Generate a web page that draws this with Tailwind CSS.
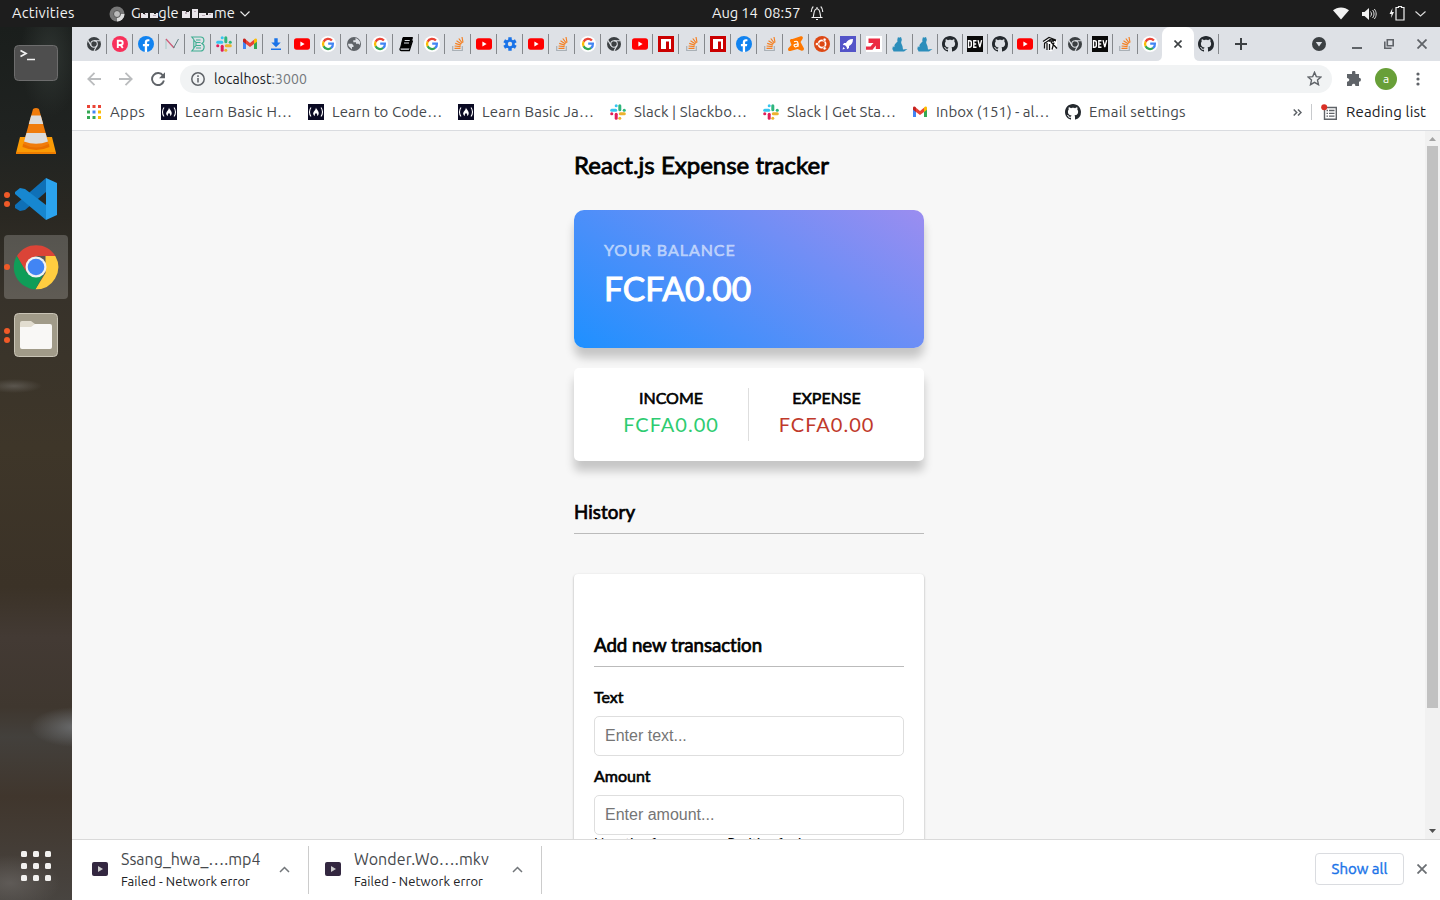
<!DOCTYPE html>
<html lang="en">
<head>
<meta charset="utf-8">
<title>Expense tracker</title>
<script src="https://cdn.jsdelivr.net/npm/@tailwindcss/browser@4"></script>
</head>
<body class="h-[900px] w-[1440px] overflow-hidden flex flex-col font-['Ubuntu','Noto_Sans',sans-serif] text-[15px] leading-none bg-white">

<svg class="hidden">
  <symbol id="chrome-dark" viewBox="0 0 16 16"><circle cx="8" cy="8" r="7" fill="#3c4043"/><circle cx="8" cy="8" r="3.300" fill="none" stroke="#dee1e6" stroke-width="1.100"/><path d="M8 4.700h6.200M5.100 9.600 2 4.400M10.900 9.600 8 15" stroke="#dee1e6" stroke-width="1.100" fill="none"/></symbol>
  <symbol id="r" viewBox="0 0 16 16"><circle cx="8" cy="8" r="8" fill="#f8305a"/><path d="M5.800 12V4.800h2.800a2.100 2.100 0 0 1 0 4.200H6M8.600 9l2.200 3" stroke="#fff" stroke-width="1.900" fill="none"/></symbol>
  <symbol id="fb" viewBox="0 0 16 16"><circle cx="8" cy="8" r="8" fill="#1183f0"/><path d="M6.800 16v-5.700H4.900V8h1.900V6.300c0-2 1.200-3.100 3-3.100l1.600.1v2h-1c-1 0-1.300.6-1.300 1.200V8h2.200l-.4 2.300H9.100V16z" fill="#fff"/></symbol>
  <symbol id="n" viewBox="0 0 16 16"><path d="M2 13V3l9 9" stroke="#a7c9c6" stroke-width="1" fill="none"/><path d="m2 3 8 9" stroke="#d25a78" stroke-width="1.200"/><path d="m9.500 12 5-9" stroke="#5f7d80" stroke-width="1"/></symbol>
  <symbol id="b" viewBox="0 0 16 16"><path d="M1.800 1h9c3.500 0 4.200 5 1.200 6.500 3.500 1.500 2.500 7.500-1.500 7.500H1.800l2-2.500V3.500zM6 4h4.500M6 12h5M6 6.500h4.500M6 9.500h5M3.800 4 6 6.500v3L3.800 12" fill="none" stroke="#3fae92" stroke-width="1.100"/></symbol>
  <symbol id="slack" viewBox="0 0 16 16"><g stroke-width="3" stroke-linecap="round" fill="none"><path d="M1.700 6.200h4" stroke="#36c5f0"/><path d="M6.200 1.700v.1" stroke="#36c5f0"/><path d="M9.800 1.700v4" stroke="#2eb67d"/><path d="M14.300 6.200h-.1" stroke="#2eb67d"/><path d="M14.300 9.800h-4" stroke="#ecb22e"/><path d="M9.800 14.300v-.1" stroke="#ecb22e"/><path d="M6.200 14.300v-4" stroke="#e01e5a"/><path d="M1.700 9.800h.1" stroke="#e01e5a"/></g></symbol>
  <symbol id="gmail" viewBox="0 0 16 16"><path d="M1 4v9h3V7z" fill="#4285f4"/><path d="M12 7v6h3V4z" fill="#34a853"/><path d="M12 3.500V8l3-2.200V4c0-1.500-1.700-2-3-.5" fill="#fbbc04"/><path d="M4 3.500V8L1 5.800V4c0-1.500 1.700-2 3-.5" fill="#c5221f"/><path d="M4 3.800 8 7l4-3.200V8l-4 3-4-3z" fill="#ea4335"/></symbol>
  <symbol id="down" viewBox="0 0 16 16"><path d="M6.300 2.200h3.400v4.300h3L8 11.300 3.300 6.500h3zM3 12.500h10V14H3z" fill="#1a73e8"/></symbol>
  <symbol id="yt" viewBox="0 0 16 16"><rect y="2.300" width="16" height="11.400" rx="2.600" fill="#f00"/><path d="M6.400 5.600v4.800L10.600 8z" fill="#fff"/></symbol>
  <symbol id="g" viewBox="0 0 16 16"><circle cx="8" cy="8" r="8" fill="#fff"/><g fill="none" stroke-width="2.300"><path d="M11.900 4.600A5 5 0 0 0 3.600 5.700" stroke="#ea4335"/><path d="M3.700 5.500a5 5 0 0 0 0 5" stroke="#fbbc05"/><path d="M3.600 10.300a5 5 0 0 0 7.600 1.600" stroke="#34a853"/><path d="M11 12a5 5 0 0 0 1.900-4.400H8.200" stroke="#4285f4"/></g></symbol>
  <symbol id="globe" viewBox="0 0 16 16"><circle cx="8" cy="8" r="7" fill="#5f6368"/><path d="M2 7.800h4l1.500 1.700V11H6v2.500L2.500 10zM9.500 2v2.200H7.300v2H10v1.600h2.500l1.300 1.200.3-3C13 3.500 11 2.500 9.500 2" fill="#dee1e6"/></symbol>
  <symbol id="book" viewBox="0 0 16 16"><path d="M5 1.500h9.500L11.500 12H2.500z" stroke="#000" stroke-linejoin="round"/><path d="M2.300 12c-1 2 .5 2.500 1 2.500h8l3.200-10" fill="none" stroke="#000" stroke-width="1.300"/><path d="M6.700 4.500h5M6 7h5" stroke="#dee1e6"/></symbol>
  <symbol id="so" viewBox="0 0 16 16"><path d="M2.700 10v4.500h9.600V10" fill="none" stroke="#a9b0b6" stroke-width="1.200"/><path d="M4.500 12.300h6M4.600 10l6 .7M5.200 7.400l5.700 1.700M6.500 4.700l5 3.200M8.800 2.500l3.500 4.700M12 1l1 5.500" stroke="#f48024" stroke-width="1.200"/></symbol>
  <symbol id="gear" viewBox="0 0 16 16"><g stroke="#1a73e8" stroke-width="3.400"><path d="M8 1.300v13.400M2.200 4.700l11.600 6.600M2.200 11.300l11.600-6.600"/></g><circle cx="8" cy="8" r="4.700" fill="#1a73e8"/><circle cx="8" cy="8" r="2.200" fill="#dee1e6"/></symbol>
  <symbol id="npm" viewBox="0 0 16 16"><path d="M0 0h16v16H0z" fill="#cb0000"/><path d="M3 3h10v10h-2V5.500H8V13H3z" fill="#fff"/></symbol>
  <symbol id="avast" viewBox="0 0 16 16"><path d="M4.500 3 12 .5c2.500-.8 3.500 1 2.500 2.500L12.500 6l3.500 6.500c0 2-1.500 2.500-3 2L9.500 13l-7 2C0 15-.5 13.500.5 12L3.500 9 2 5C1.800 3.500 2.500 2.800 4.500 3" fill="#ff7800"/><path d="M6 5.800c3.500-1.500 4.500 0 4 5M10 7.800c-4 .3-4.500 1.500-3.500 2.500s2.500.5 3.500-1" fill="none" stroke="#fff" stroke-width="1.200"/></symbol>
  <symbol id="ubuntu" viewBox="0 0 16 16"><circle cx="8" cy="8" r="8" fill="#dd4814"/><circle cx="8" cy="8" r="3.600" fill="none" stroke="#fff" stroke-width="1.700"/><g fill="#fff" stroke="#dd4814" stroke-width=".6"><circle cx="3" cy="8" r="1.600"/><circle cx="10.600" cy="3.700" r="1.600"/><circle cx="10.600" cy="12.300" r="1.600"/></g></symbol>
  <symbol id="rocket" viewBox="0 0 16 16"><path d="M0 0h16v16H0z" fill="#5354c8"/><path d="M13 3C9 3 7 5 6 7H4L2.800 9l2.200.3L6.700 11l.3 2.200L9 12v-2c2-1 4-3 4-7M3.300 11l-.8 2.500L5 12.700z" fill="#fff"/></symbol>
  <symbol id="redarrow" viewBox="0 0 16 16"><path d="M0 0h16v16H0z" fill="#fff"/><path d="M2.500 2.500H14V13h-4.200V9.500L6.500 13.800H0v-3.300h4.500L7.500 7h-5z" fill="#ec2b43"/></symbol>
  <symbol id="cat" viewBox="0 0 16 16"><path d="m6 1 1 .8L9 1l.8 2.500c0 1.500-.8 2-.6 3.500l1.300 3.200.5 3.300 4.500-.5-3.500 2.500H2.300C1 13 2 11.500 2.500 10.500 2 8 4.500 7 5.500 5.500 5 4 5.500 2.500 6 1" fill="#2c8ebb"/><path d="m1 10 2 3-1 3L.3 13z" fill="#2c8ebb"/></symbol>
  <symbol id="gh" viewBox="0 0 16 16"><path fill="#24292e" d="M8 0C3.580 0 0 3.580 0 8c0 3.540 2.290 6.530 5.470 7.590.4.070.55-.17.55-.38 0-.19-.01-.82-.01-1.490-2.010.37-2.530-.49-2.690-.94-.09-.23-.48-.94-.82-1.130-.28-.15-.68-.52-.01-.53.63-.01 1.080.58 1.230.82.72 1.210 1.870.87 2.330.66.070-.52.28-.87.51-1.070-1.780-.2-3.640-.89-3.640-3.950 0-.87.31-1.590.82-2.150-.08-.2-.36-1.020.08-2.120 0 0 .67-.21 2.200.82.64-.18 1.320-.27 2-.27s1.360.09 2 .27c1.530-1.040 2.200-.82 2.200-.82.44 1.100.16 1.920.08 2.120.51.56.82 1.270.82 2.150 0 3.070-1.870 3.750-3.650 3.950.29.25.54.73.54 1.480 0 1.070-.01 1.930-.01 2.200 0 .21.15.46.55.38A8.010 8.010 0 0 0 16 8c0-4.420-3.580-8-8-8"/></symbol>
  <symbol id="dev" viewBox="0 0 16 16"><path d="M0 0h16v16H0z" fill="#0a0a0a"/><path d="M1.500 4.700v6.600h.9c1.400 0 1.900-.6 1.900-1.700V6.400c0-1.100-.5-1.700-1.900-1.700zM9.500 4.700H6.800v6.600h2.700M6.800 8h2.400M11 4.200l1.800 7 1.800-7" fill="none" stroke="#fff" stroke-width="1.400"/></symbol>
  <symbol id="box" viewBox="0 0 16 16"><path d="M1 6 7 1l8 3v7l-6 4.500L2 12z" fill="#fff"/><path d="M1 5.500 7 1.500 14 4M3 7l6-4 5 2M2.500 6.500v6M5 7v7M7.500 8v6M9 6l6 6.500M12 6.500l-2 7M7 5h5" stroke="#111" stroke-width="1.300" fill="none"/></symbol>
  <symbol id="fcc" viewBox="0 0 16 16"><path d="M0 0h16v16H0z" fill="#0a0a23"/><path d="M3 3.500c-2 2.500-2 6.500 0 9M13 3.500c2 2.500 2 6.500 0 9" fill="none" stroke="#fff" stroke-width="1.100"/><path d="M8 3.500c.3 2 3 3.500 2.700 6C10.600 11 9.700 12 9 12c.5-1 .3-2-1-3-1.200 1-1.500 2-1 3-1.500-.7-2.200-2-1.700-3.300C5.900 7 7.700 6 8 3.500" fill="#fff"/></symbol>
</svg>

<!-- desktop top bar -->
<header class="h-[27px] shrink-0 bg-[#1d1d1d] text-[#f2f2f2] text-[14.67px] flex items-center relative">
  <span class="ml-3 w-[63px] tracking-[0.25px] whitespace-nowrap">Activities</span>
  <svg class="ml-[34px] size-4" viewBox="0 0 16 16"><circle cx="8" cy="8" r="7.500" fill="#777"/><path d="M8 8h7.500A7.500 7.500 0 0 1 8 15.500z" fill="#ddd"/><circle cx="8" cy="8" r="3.500" fill="#bbb" stroke="#555"/></svg>
  <span class="ml-[6px] w-[104px] relative tracking-[0.09px] whitespace-nowrap">Google Chrome
    <svg class="absolute left-[10px] top-[-2px]" width="75" height="17" viewBox="0 0 75 17" shape-rendering="crispEdges"><path fill="#1d1d1d" d="M0 0h17v17H0zM41 0h32v17H41z"/><path fill="#e9e6ea" d="M0 9h7v5H0zM9 9h8v5H9zM41 7h8v7h-8zM51 5h6v9h-6zM58 9h14v5H58z"/><path fill="#b8a8b4" d="M3 10h2v1H3zM12 11h3v1h-3zM44 8h2v2h-2zM53 7h2v1h-2zM61 11h3v1h-3zM68 10h2v1h-2z"/><path fill="#1d1d1d" d="M2 9h2v1H2zM13 9h2v1h-2zM45 7h3v1h-3zM65 9h2v2h-2z"/></svg>
  </span>
  <svg class="ml-[5px]" width="10" height="6" viewBox="0 0 10 6"><path d="m.5.5 4.500 4.500L9.500.5" fill="none" stroke="#e8e8e8" stroke-width="1.200"/></svg>
  <div class="absolute left-[712px] top-0 h-full flex items-center">
    <span class="w-[98px] tracking-[-0.1px] whitespace-pre">Aug 14  08:57</span>
    <svg class="mb-[2px]" width="14" height="16" viewBox="0 0 14 16" fill="none" stroke="#f2f2f2" stroke-width="1.100"><path d="M1.500 12.500h11M3.200 12c1-3 .3-8 3.800-8.300 3.500.3 2.800 5.300 3.800 8.300M6 14.500h2M7 2v1.500M3.300 1.500C1.500 3 1.300 5 1.200 7M10.700 1.500C12.500 3 12.700 5 12.800 7"/></svg>
  </div>
  <div class="ml-auto mr-[14px] flex items-center">
    <svg width="16" height="13" viewBox="0 0 16 13"><path d="M0 3.300C4-.6 12-.6 16 3.300L8 12.500z" fill="#f2f2f2"/></svg>
    <svg class="ml-3" width="16" height="14" viewBox="0 0 16 14"><path d="M1 5h2.500L8 1v12L3.500 9H1z" fill="#f2f2f2"/><path d="M9.500 4.500c1.300 1.500 1.300 3.500 0 5M11.500 3c2 2.300 2 5.700 0 8M13.300 2c2.500 3 2.500 7 0 10" fill="none" stroke="#ddd"/></svg>
    <svg class="ml-3 mb-[2px]" width="16" height="16" viewBox="0 0 16 16"><path d="M3.500 3 .5 9h2L2 13l3-6H3z" fill="#f2f2f2"/><path d="M7 2.500h2.500v-1h3v1H15v12.500H7z" fill="none" stroke="#f2f2f2" stroke-width="1.200"/></svg>
    <svg class="ml-[10px]" width="11" height="6" viewBox="0 0 11 6"><path d="m.5.5 5 4.500 5-4.500" fill="none" stroke="#ddd" stroke-width="1.100"/></svg>
  </div>
</header>

<div class="flex-1 flex min-h-0">
  <!-- dock -->
  <nav class="w-[72px] shrink-0 pt-1 flex flex-col items-center gap-1 bg-[radial-gradient(ellipse_28px_7px_at_14px_359px,#6a6660aa,transparent),radial-gradient(ellipse_46px_20px_at_76px_700px,#74777acc,transparent),radial-gradient(ellipse_50px_28px_at_10px_856px,#6b6764aa,transparent),radial-gradient(ellipse_30px_60px_at_50px_30px,#2e3431,transparent),linear-gradient(180deg,#1a1e1c_0px,#202321_110px,#2a2822_190px,#37322a_270px,#3a342a_330px,#3e3629_420px,#3b3227_560px,#433a34_610px,#3f372f_680px,#43403c_710px,#40362d_770px,#484440_873px)]">
    <div class="size-16 grid place-items-center"><svg width="44" height="36" viewBox="0 0 44 36"><rect x=".5" y=".5" width="43" height="35" rx="4" fill="#4e4e4e" stroke="#6d6d6d"/><path d="m6.500 5.500 5.500 3-5.500 3M13 14.500h8" fill="none" stroke="#f2f2f2" stroke-width="1.700"/></svg></div>
    <div class="size-16 grid place-items-center"><svg width="42" height="46" viewBox="0 0 42 46"><path d="M5 29h32l4 16H1z" fill="#fb9b05"/><path d="M1 44h40v2H1z" fill="#ef7e00"/><path d="M18 1q3-2 6 0l10 36q-13 7-26 0z" fill="#f07c0c"/><path d="M16.200 7.500h9.600l2.400 8.500H13.800zM11.500 25h19l2.500 8.500q-12 4.500-24 0z" fill="#dcdcdc"/><path d="M8 36q13 7 26 0l.5 3q-13 6-27 0z" fill="#e86f00"/></svg></div>
    <div class="size-16 grid place-items-center relative">
      <svg width="42" height="42" viewBox="0 0 42 42"><path d="M31 0 0 27v3l5 3 5-1L31 14z" fill="#0f70b7"/><path d="m0 14 5-4 5 1 21 16v15L0 16z" fill="#1787d0"/><path d="m31 0 11 5v32l-11 5z" fill="#2ba3ee"/></svg>
      <span class="absolute left-0 top-[25px] size-[6px] rounded-full bg-[#f05a28]"></span><span class="absolute left-0 top-[34px] size-[6px] rounded-full bg-[#f05a28]"></span>
    </div>
    <div class="size-16 grid place-items-center relative rounded bg-white/20">
      <svg width="46" height="46" viewBox="0 0 46 46"><path d="M4 12a22.300 22.300 0 0 1 38.300 0H23L13 28z" fill="#db4437"/><path d="M42.300 12A22.300 22.300 0 0 1 22.500 45.300L32.500 29V12z" fill="#ffcd40"/><path d="M3.700 12A22.300 22.300 0 0 0 22.500 45.300L31 29l-17 0z" fill="#0f9d58"/><circle cx="23" cy="23" r="10.500" fill="#f1f1f1"/><circle cx="23" cy="23" r="8.300" fill="#4285f4"/></svg>
      <span class="absolute left-0 top-[29px] size-[6px] rounded-full bg-[#f05a28]"></span>
    </div>
    <div class="size-16 grid place-items-center relative">
      <svg width="44" height="44" viewBox="0 0 44 44"><rect x=".5" y=".5" width="43" height="43" rx="4" fill="#a19b89" stroke="#c9c4b6"/><path d="M6 12V10q0-2 2-2h9l4 3v5H6z" fill="#e2ddd0"/><path d="M6 14h11l4-3h15q2 0 2 2v21q0 2-2 2H8q-2 0-2-2z" fill="#f9f8f6"/></svg>
      <span class="absolute left-0 top-[25px] size-[6px] rounded-full bg-[#f05a28]"></span><span class="absolute left-0 top-[34px] size-[6px] rounded-full bg-[#f05a28]"></span>
    </div>
    <svg class="mt-auto mb-[19px]" width="30" height="30" viewBox="0 0 30 30" fill="#f2f1ef"><rect width="6" height="6" rx="1.500"/><rect x="12" width="6" height="6" rx="1.500"/><rect x="24" width="6" height="6" rx="1.500"/><rect y="12" width="6" height="6" rx="1.500"/><rect x="12" y="12" width="6" height="6" rx="1.500"/><rect x="24" y="12" width="6" height="6" rx="1.500"/><rect y="24" width="6" height="6" rx="1.500"/><rect x="12" y="24" width="6" height="6" rx="1.500"/><rect x="24" y="24" width="6" height="6" rx="1.500"/></svg>
  </nav>

  <!-- browser window -->
  <section class="flex-1 min-w-0 flex flex-col">
    <div class="h-[34px] shrink-0 bg-[#dee1e6] flex pl-[9px]">
      <div id="tabs" class="flex"></div>
      <div class="w-[24px] grid place-items-center"><svg class="size-4"><use href="#g"/></svg></div>
      <div class="relative w-8 bg-white rounded-t-lg grid place-items-center">
        <svg width="8" height="8" viewBox="0 0 8 8"><path d="m.5.5 7 7m0-7-7 7" stroke="#3c4043" stroke-width="1.600"/></svg>
        <svg class="absolute bottom-0 -left-[6px]" width="6" height="6"><path d="M6 0v6H0q6 0 6-6" fill="#fff"/></svg>
        <svg class="absolute bottom-0 -right-[6px]" width="6" height="6"><path d="M0 0v6h6Q0 6 0 0" fill="#fff"/></svg>
      </div>
      <div class="w-[25px] h-[34px] flex items-center justify-between"><svg class="size-4 ml-1"><use href="#gh"/></svg><span class="w-px h-5 bg-[#85888c]"></span></div>
      <svg class="ml-4 mt-[11px]" width="12" height="12" viewBox="0 0 12 12"><path d="M6 0v12M0 6h12" stroke="#3c4043" stroke-width="2"/></svg>
      <div class="ml-auto mr-[13px] flex items-center">
        <svg width="14" height="14" viewBox="0 0 14 14"><circle cx="7" cy="7" r="7" fill="#3c4043"/><path d="M3.800 5h6.400L7 9.500z" fill="#dee1e6"/></svg>
        <span class="ml-[26px] mt-2 w-[10px] h-[2px] bg-[#5f6368]"></span>
        <svg class="ml-[22px]" width="10" height="10" viewBox="0 0 10 10" fill="none" stroke="#5f6368" stroke-width="1.600"><path d="M3.300.8h5.900v5.900H3.300zM.8 2.500v6.700h6.700"/></svg>
        <svg class="ml-[23px]" width="10" height="10" viewBox="0 0 10 10"><path d="m.5.5 9 9m0-9-9 9" stroke="#5f6368" stroke-width="1.800"/></svg>
      </div>
    </div>

    <div class="h-9 shrink-0 flex items-center pl-[15px] pr-[20px]">
      <svg width="14" height="14" viewBox="0 0 14 14" fill="none" stroke="#babcbe" stroke-width="1.800"><path d="M14 7H1.500M7.500.8 1.300 7l6.200 6.200"/></svg>
      <svg class="ml-[18px]" width="14" height="14" viewBox="0 0 14 14" fill="none" stroke="#babcbe" stroke-width="1.800"><path d="M0 7h12.500M6.500.8 12.700 7l-6.200 6.200"/></svg>
      <svg class="ml-[18px]" width="14" height="14" viewBox="0 0 14 14"><path d="M12 3.600A6 6 0 1 0 12.900 8.500" fill="none" stroke="#5f6368" stroke-width="1.900"/><path d="M14 .3v6H8z" fill="#5f6368"/></svg>
      <div class="ml-[15px] w-[1152px] h-7 rounded-full bg-[#f1f3f4] flex items-center pl-[11px] pr-[10px] text-[14px]">
        <svg width="14" height="14" viewBox="0 0 14 14"><circle cx="7" cy="7" r="6.200" fill="none" stroke="#5f6368" stroke-width="1.500"/><path d="M7 6v4.500M7 3.300v1.600" stroke="#5f6368" stroke-width="1.500"/></svg>
        <span class="ml-[9px] tracking-[0.07px] text-[#202124] whitespace-nowrap">localhost<span class="text-[#73777b]">:3000</span></span>
        <svg class="ml-auto mb-px" width="15" height="15" viewBox="0 0 15 15"><path d="m7.500 1.300 1.800 4.300 4.700.4-3.500 3.100 1 4.600-4-2.400-4 2.400 1-4.600L1 6l4.700-.4z" fill="none" stroke="#5f6368" stroke-width="1.400"/></svg>
      </div>
      <svg class="ml-[14px]" width="16" height="16" viewBox="0 0 16 16"><path d="M6 1.500a1.700 1.700 0 0 1 3.400 0V3H13v3.700a2 2 0 0 1 0 4V15H9.300c.3-3-3.600-3-3.500 0H1v-4.300c3-.2 3-3.500 0-3.700V3h5z" fill="#5f6368"/></svg>
      <span class="ml-[13px] size-[22px] rounded-full bg-[#689f38] text-white grid place-items-center text-[12px]">a</span>
      <svg class="ml-auto" width="4" height="14" viewBox="0 0 4 14" fill="#5f6368"><circle cx="2" cy="2" r="1.600"/><circle cx="2" cy="7" r="1.600"/><circle cx="2" cy="12" r="1.600"/></svg>
    </div>

    <div class="h-[34px] shrink-0 border-b border-[#dadce0] flex items-center pl-[15px] pr-[14px] pb-[3px] leading-[17px] text-[#46494d] whitespace-nowrap">
      <svg class="mr-[9px]" width="14" height="14" viewBox="0 0 14 14"><path fill="#ea4335" d="M0 0h3v3H0zM5.500 0h3v3h-3zM11 0h3v3h-3z"/><path fill="#34a853" d="M0 5.500h3v3H0zM0 11h3v3H0z"/><path fill="#4285f4" d="M5.500 5.500h3v3h-3z"/><path fill="#fbbc04" d="M11 5.500h3v3h-3zM11 11h3v3h-3z"/><path fill="#34a853" d="M5.500 11h3v3h-3z"/></svg>
      <span class="pb-[2px] w-[51px] tracking-[0.3px]">Apps</span>
      <svg class="size-4 mr-2"><use href="#fcc"/></svg><span class="pb-[2px] w-[123px] tracking-[0.19px]">Learn Basic H…</span>
      <svg class="size-4 mr-2"><use href="#fcc"/></svg><span class="pb-[2px] w-[126px] tracking-[0.06px]">Learn to Code…</span>
      <svg class="size-4 mr-2"><use href="#fcc"/></svg><span class="pb-[2px] w-[128px] tracking-[0.2px]">Learn Basic Ja…</span>
      <svg class="size-4 mr-2"><use href="#slack"/></svg><span class="pb-[2px] w-[129px] tracking-[0.1px]">Slack | Slackbo…</span>
      <svg class="size-4 mr-2"><use href="#slack"/></svg><span class="pb-[2px] w-[125px]">Slack | Get Sta…</span>
      <svg class="size-4 mr-2"><use href="#gmail"/></svg><span class="pb-[2px] w-[129px]">Inbox (151) - al…</span>
      <svg class="size-4 mr-2"><use href="#gh"/></svg><span class="pb-[2px] tracking-[0.2px]">Email settings</span>
      <svg class="ml-auto" width="9" height="7" viewBox="0 0 9 7"><path d="m.7.5 3 3-3 3m4.300-6 3 3-3 3" fill="none" stroke="#5f6368" stroke-width="1.500"/></svg>
      <span class="ml-[9px] w-px h-4 bg-[#c8cacd]"></span>
      <svg class="ml-[9px] mr-[8px]" width="17" height="17" viewBox="0 0 17 17"><path d="M3.500 3.500h11.800v11.800H3.500z" fill="none" stroke="#5f6368" stroke-width="1.400"/><path d="M5.500 6.500H7m1 0h5.500M5.500 9.300H7m1 0h5.500M5.500 12.200H7m1 0h5.500" stroke="#5f6368" stroke-width="1.300"/><circle cx="3.200" cy="3.200" r="3" fill="#d93025"/></svg>
      <span class="pb-[2px] w-20 tracking-[0.15px] text-[#202124]">Reading list</span>
    </div>

    <!-- page -->
    <div class="flex-1 min-h-0 flex overflow-hidden bg-[#f7f7f7]">
      <main class="flex-1 min-w-0 overflow-hidden font-['Lato',sans-serif] text-base leading-normal text-black">
        <div class="w-[350px] ml-[502px] pt-[16px]">
          <h2 class="text-[24px] leading-9 whitespace-nowrap [-webkit-text-stroke:0.8px]">React.js Expense tracker</h2>
          <div class="mt-[27px] h-[138px] rounded-[10px] pt-[28px] pl-[30px] text-white bg-[linear-gradient(34deg,#1e90ff,#9b8df0)] shadow-[0_10px_10px_rgba(0,0,0,0.2)]">
            <h4 class="leading-6 text-white/50 tracking-[0.95px] [-webkit-text-stroke:0.6px]">YOUR BALANCE</h4>
            <p class="text-[33.600px] leading-[52px] [-webkit-text-stroke:1px]">FCFA0.00</p>
          </div>
          <div class="mt-5 h-[93px] rounded-[5px] bg-white p-5 flex text-center shadow-[0_10px_10px_rgba(0,0,0,0.2)]">
            <div class="w-[155px] h-[53px] border-r border-[#dedede]">
              <h4 class="leading-5 [-webkit-text-stroke:0.6px]">INCOME</h4>
              <p class="text-[20px] leading-[32px] tracking-[1px] text-[#2ecc71]">FCFA0.00</p>
            </div>
            <div class="w-[155px] h-[53px]">
              <h4 class="leading-5 [-webkit-text-stroke:0.6px]">EXPENSE</h4>
              <p class="text-[20px] leading-[32px] tracking-[1px] text-[#c0392b]">FCFA0.00</p>
            </div>
          </div>
          <h3 class="mt-[37px] h-[36px] text-[18.720px] leading-7 tracking-[0.1px] border-b border-[#bbb] [-webkit-text-stroke:0.7px]">History</h3>
          <div class="mt-10 h-[400px] px-5 pt-[57px] rounded-[4px] bg-white shadow-[0_1px_3px_rgba(0,0,0,0.12),0_1px_2px_rgba(0,0,0,0.24)]">
            <h3 class="h-[36px] text-[18.720px] leading-7 tracking-[-0.06px] border-b border-[#bbb] [-webkit-text-stroke:0.7px]">Add new transaction</h3>
            <label class="block mt-[18px] leading-6 [-webkit-text-stroke:0.6px]">Text</label>
            <input class="block mt-[7px] w-full h-10 rounded-[5px] border border-[#dedede] px-[10px] text-base font-['Liberation_Sans',sans-serif] placeholder:text-[#757575]" placeholder="Enter text...">
            <label class="block mt-[8px] leading-6 [-webkit-text-stroke:0.6px]">Amount</label>
            <input class="block mt-[7px] w-full h-10 rounded-[5px] border border-[#dedede] px-[10px] text-base font-['Liberation_Sans',sans-serif] placeholder:text-[#757575]" placeholder="Enter amount...">
            <p class="text-[13.600px] leading-[17px]">Negative for expense, Positive for income</p>
          </div>
        </div>
      </main>
      <div class="w-[15px] shrink-0 bg-[#f1f1f1] flex flex-col items-center justify-between">
        <svg class="mt-[6px]" width="7" height="4" viewBox="0 0 7 4"><path d="M0 4 3.500 0 7 4z" fill="#a3a3a3"/></svg>
        <div class="mt-[5px] w-[11px] h-[562px] bg-[#c1c1c1]"></div>
        <svg class="mt-auto mb-[6px]" width="7" height="4" viewBox="0 0 7 4"><path d="M0 0 3.500 4 7 0z" fill="#505050"/></svg>
      </div>
    </div>

    <!-- downloads -->
    <div class="h-[61px] shrink-0 bg-white border-t border-[#dadada] flex items-center pl-[20px] pr-[13px]">
      <svg class="mb-[2px]" width="16" height="14" viewBox="0 0 16 14"><rect width="16" height="14" rx="2" fill="#332740"/><path d="M6 4v6l5-3z" fill="#ccc"/></svg>
      <div class="ml-[13px] w-[158px] whitespace-nowrap"><p class="text-[16px] leading-[22px] text-[#46494d]">Ssang_hwa_….mp4</p><p class="text-[13px] leading-[22px] tracking-[0.08px] text-[#202124]">Failed - Network error</p></div>
      <svg class="mb-px" width="11" height="7" viewBox="0 0 11 7"><path d="m1 6 4.500-4.500L10 6" fill="none" stroke="#72767a" stroke-width="1.500"/></svg>
      <span class="ml-[18px] w-px h-12 bg-[#ccc]"></span>
      <svg class="ml-4 mb-[2px]" width="16" height="14" viewBox="0 0 16 14"><rect width="16" height="14" rx="2" fill="#332740"/><path d="M6 4v6l5-3z" fill="#ccc"/></svg>
      <div class="ml-[13px] w-[158px] whitespace-nowrap"><p class="text-[16px] leading-[22px] tracking-[0.1px] text-[#46494d]">Wonder.Wo….mkv</p><p class="text-[13px] leading-[22px] tracking-[0.08px] text-[#202124]">Failed - Network error</p></div>
      <svg class="mb-px" width="11" height="7" viewBox="0 0 11 7"><path d="m1 6 4.500-4.500L10 6" fill="none" stroke="#72767a" stroke-width="1.500"/></svg>
      <span class="ml-[18px] w-px h-12 bg-[#ccc]"></span>
      <div class="ml-auto w-[89px] h-8 mb-[2px] pb-[2px] rounded border border-[#dadce0] grid place-items-center text-[#1a73e8] [-webkit-text-stroke:0.4px] whitespace-nowrap">Show all</div>
      <svg class="ml-[13px] mb-[2px]" width="10" height="10" viewBox="0 0 10 10"><path d="m.5.5 9 9m0-9-9 9" stroke="#6b6f73" stroke-width="1.800"/></svg>
    </div>
  </section>
</div>
<script>
const wide = ['chrome-dark','r','fb','n','b','slack','gmail','down','yt','g','globe','g','book','g','so','yt','gear','yt','so','g','chrome-dark','yt','npm','so','npm','fb','so','avast','ubuntu','rocket','redarrow','cat'];
const narrow = ['cat','gh','dev','gh','yt','box','chrome-dark','dev','so'];
const cell = (id, cls) => `<div class="${cls}"><svg class="size-4"><use href="#${id}"/></svg><span class="w-px h-5 bg-[#85888c]"></span></div>`;
document.getElementById('tabs').innerHTML =
  wide.map(id => cell(id, 'w-[26px] h-[34px] pl-[5px] flex items-center justify-between')).join('') +
  narrow.map(id => cell(id, 'w-[25px] h-[34px] pl-1 flex items-center justify-between')).join('');
</script>
</body>
</html>
